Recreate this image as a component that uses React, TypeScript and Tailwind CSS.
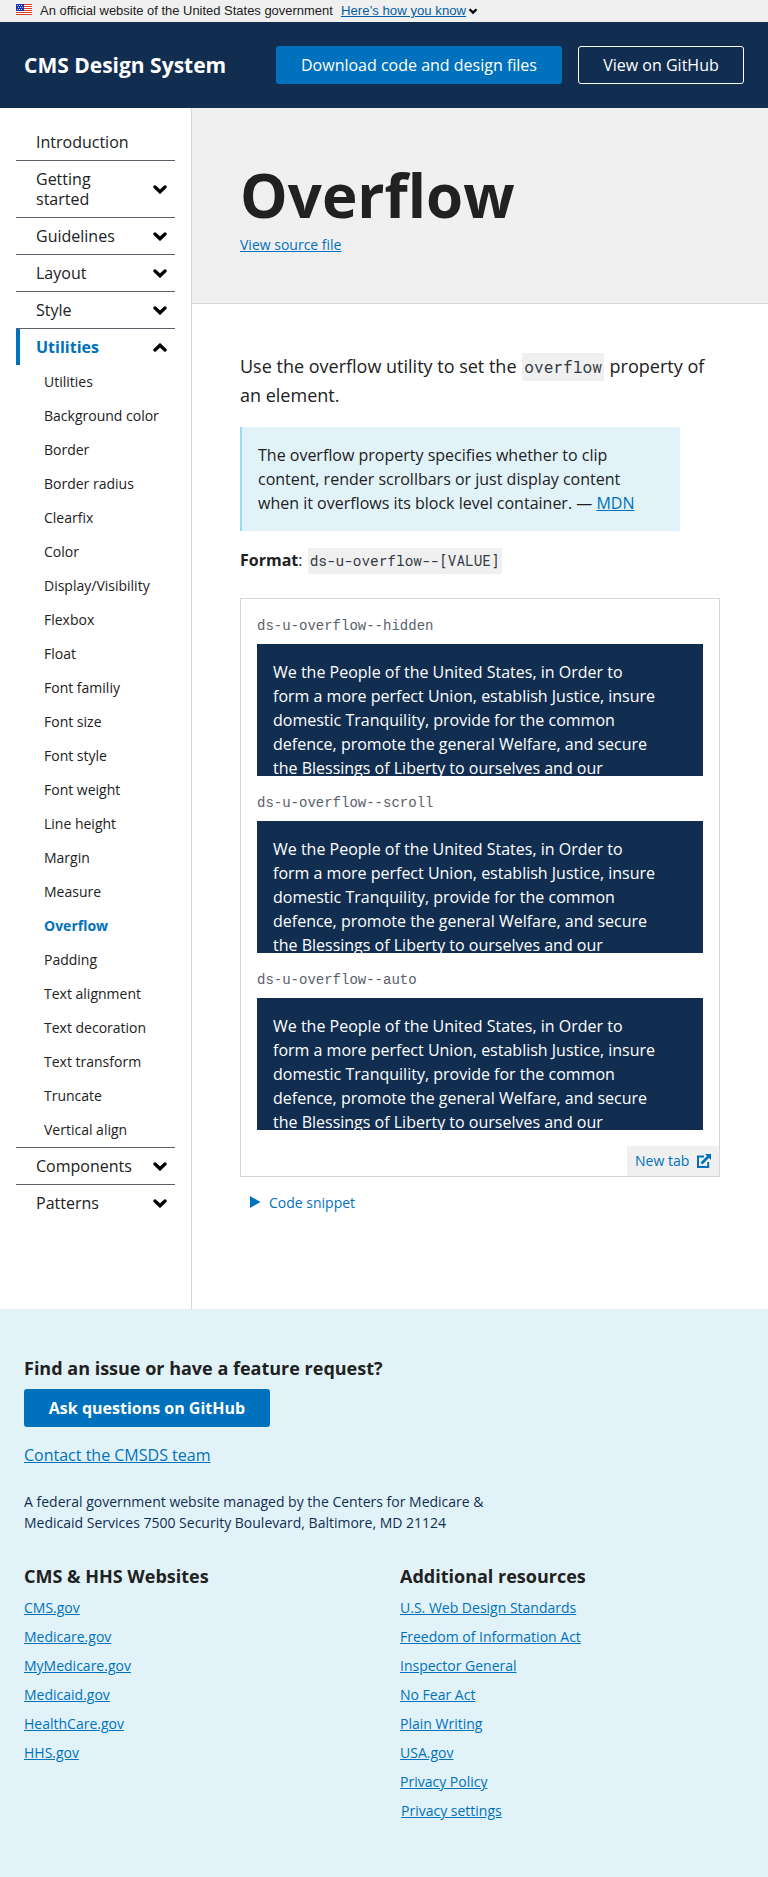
import React from "react";

const subItems = [
  "Utilities", "Background color", "Border", "Border radius", "Clearfix", "Color",
  "Display/Visibility", "Flexbox", "Float", "Font familiy", "Font size", "Font style",
  "Font weight", "Line height", "Margin", "Measure", "Overflow", "Padding",
  "Text alignment", "Text decoration", "Text transform", "Truncate", "Vertical align",
];

const cmsLinks = ["CMS.gov", "Medicare.gov", "MyMedicare.gov", "Medicaid.gov", "HealthCare.gov", "HHS.gov"];
const resourceLinks = [
  "U.S. Web Design Standards", "Freedom of Information Act", "Inspector General",
  "No Fear Act", "Plain Writing", "USA.gov", "Privacy Policy",
];

function Flag() {
  return (
    <svg className="h-[11px] w-4" viewBox="0 0 16 11" shapeRendering="crispEdges">
      <rect width="16" height="11" fill="#fff" />
      {[0, 2, 4, 6, 8, 10].map((y) => (
        <rect key={y} y={y} width="16" height="1" fill="#db3e1f" />
      ))}
      <rect width="8" height="7" fill="#1e33b1" />
      {[1, 3, 5].map((y) =>
        [1, 3, 5].map((x) => (
          <rect key={`${x}-${y}`} x={y === 3 ? x + 1 : x} y={y} width="1" height="1" fill="#c9cef0" />
        ))
      )}
    </svg>
  );
}

function Chevron({ up = false }: { up?: boolean }) {
  return (
    <svg className="h-[9px] w-3.5 shrink-0" viewBox="0 0 14 9">
      <path
        d={up ? "M2 7 L7 2.2 L12 7" : "M2 2 L7 6.8 L12 2"}
        fill="none"
        stroke="#000"
        strokeWidth="3.3"
        strokeLinecap="round"
      />
    </svg>
  );
}

function NavItem({ label, first = false }: { label: string; first?: boolean }) {
  return (
    <div className={first ? "" : "border-t border-[#5b616b]"}>
      <div className="flex items-center justify-between py-2 pr-2 pl-5">
        <span className="w-[84px] text-base leading-5 whitespace-normal">{label}</span>
        {!first && <Chevron />}
      </div>
    </div>
  );
}

function Example({ name }: { name: string }) {
  return (
    <div className="h-[177px]">
      <div className="flex h-[45px] items-center pt-[9px] font-['Courier_New','Liberation_Mono',monospace] text-sm leading-5 text-[#5b616b]">
        {name}
      </div>
      <div className="h-[132px] overflow-hidden bg-[#112e51] p-4 text-base leading-6 text-white">
        We the People of the United States, in Order to
        <br />
        form a more perfect Union, establish Justice, insure
        <br />
        domestic Tranquility, provide for the common
        <br />
        defence, promote the general Welfare, and secure
        <br />
        the Blessings of Liberty to ourselves and our
      </div>
    </div>
  );
}

function FooterLink({ children }: { children: React.ReactNode }) {
  return (
    <li className="h-[29px] text-sm leading-[21px]">
      <a className="text-[#0071bc] underline">{children}</a>
    </li>
  );
}

export default function App() {
  return (
    <div className="w-[768px] bg-white font-['Open_Sans',sans-serif] text-[#212121]">
      <div className="flex h-[22px] items-center bg-[#f0f0f0] pl-4 font-['Liberation_Sans',sans-serif] text-[12.96px]">
        <div className="pb-[3px]"><Flag /></div>
        <span className="ml-2 w-[301px] whitespace-nowrap">An official website of the United States government</span>
        <a className="w-[127px] text-[13.2px] whitespace-nowrap text-[#005ea2] underline">Here’s how you know</a>
        <svg className="h-2 w-[10px]" viewBox="0 0 10 8">
          <path d="M1.5 2.2 L5 5.6 L8.5 2.2" fill="none" stroke="#000" strokeWidth="2.2" />
        </svg>
      </div>

      <header className="flex h-[86px] items-center bg-[#112e51] px-6 text-white">
        <div className="text-[21px] leading-6 font-bold">CMS Design System</div>
        <div className="ml-auto flex gap-4 text-base">
          <a className="flex h-[38px] w-[286px] items-center justify-center rounded-[3px] bg-[#0071bc]">Download code and design files</a>
          <a className="flex h-[38px] w-[166px] items-center justify-center rounded-[3px] border border-white">View on GitHub</a>
        </div>
      </header>

      <div className="flex h-[1201px]">
        <nav className="w-48 shrink-0 border-r border-[#d6d7d9] py-4 pr-4 pl-4">
          <NavItem label="Introduction" first />
          {["Getting started", "Guidelines", "Layout", "Style"].map((l) => (
            <NavItem key={l} label={l} />
          ))}
          <div className="border-t border-[#5b616b]">
            <div className="flex items-center justify-between border-l-4 border-[#0071bc] py-2 pr-2 pl-4">
              <span className="text-base leading-5 font-bold text-[#0071bc]">Utilities</span>
              <Chevron up />
            </div>
          </div>
          <ul>
            {subItems.map((l) => (
              <li
                key={l}
                className={
                  l === "Overflow"
                    ? "h-[34px] pl-7 text-sm leading-[34px] font-bold text-[#0071bc]"
                    : "h-[34px] pl-7 text-sm leading-[34px]"
                }
              >
                {l}
              </li>
            ))}
          </ul>
          <NavItem label="Components" />
          <NavItem label="Patterns" />
        </nav>

        <main className="min-w-0 flex-1">
          <div className="h-[196px] border-b border-[#d6d7d9] bg-[#f0f0f0] pt-12 pl-12">
            <h1 className="text-[60px] leading-[78px] font-bold">Overflow</h1>
            <a className="block text-sm leading-[21px] text-[#0071bc] underline">View source file</a>
          </div>
          <div className="px-12 pt-12">
            <p className="text-lg leading-[29px]">
              Use the overflow utility to set the{" "}
              <code className="mx-px bg-[#f0f0f0] px-[2px] pt-[3px] pb-[4px] font-['Roboto_Mono','Liberation_Mono',monospace] text-[16.2px] text-[#323a45]">overflow</code>{" "}
              property of
              <br />
              an element.
            </p>
            <blockquote className="mt-[17px] h-[104px] w-[440px] border-l-2 border-[#9bdaf1] bg-[#e1f3f8] py-4 pl-4 text-base leading-6">
              The overflow property specifies whether to clip
              <br />
              content, render scrollbars or just display content
              <br />
              when it overflows its block level container. — <a className="text-[#0071bc] underline">MDN</a>
            </blockquote>
            <p className="mt-[17px] text-base leading-6">
              <b>Format</b>:{" "}
              <code className="mx-px bg-[#f0f0f0] px-[2px] pt-[3px] pb-[4px] font-['Roboto_Mono','Liberation_Mono',monospace] text-[14.4px] text-[#323a45]">ds-u-overflow--[VALUE]</code>
            </p>
            <section className="mt-[25px] h-[579px] border border-[#d6d7d9]">
              <div className="px-4">
                <Example name="ds-u-overflow--hidden" />
                <Example name="ds-u-overflow--scroll" />
                <Example name="ds-u-overflow--auto" />
              </div>
              <div className="mt-4 flex justify-end">
                <a className="flex h-[30px] w-[92px] items-center justify-between bg-[#f0f0f0] px-2 text-sm text-[#0071bc]">
                  New tab
                  <svg className="h-3.5 w-3.5" viewBox="0 0 14 14">
                    <path d="M7 2.5 H1 V13 H11.2 V8" fill="none" stroke="#0071bc" strokeWidth="2" />
                    <path d="M4.5 9.5 L11.5 2.5" stroke="#0071bc" strokeWidth="2.6" />
                    <path d="M8 0 H14 V6 Z" fill="#0071bc" />
                  </svg>
                </a>
              </div>
            </section>
            <div className="mt-[15px] flex items-center pl-[10px] text-sm leading-[21px] text-[#0071bc]">
              <svg className="mr-2 mb-[2px] h-3 w-[11px]" viewBox="0 0 11 12">
                <path d="M0 0 L10.5 6 L0 12 Z" fill="#0071bc" />
              </svg>
              Code snippet
            </div>
          </div>
        </main>
      </div>

      <footer className="h-[568px] bg-[#e1f3f8] px-6 pt-[47px]">
        <h2 className="text-lg leading-6 font-bold">Find an issue or have a feature request?</h2>
        <a className="mt-[9px] flex h-[38px] w-[246px] items-center justify-center rounded-[3px] bg-[#0071bc] text-base font-bold text-white">
          Ask questions on GitHub
        </a>
        <a className="mt-4 block text-base leading-6 text-[#0071bc] underline">Contact the CMSDS team</a>
        <p className="mt-6 text-sm leading-[21px] text-[#112e51]">
          A federal government website managed by the Centers for Medicare &amp;
          <br />
          Medicaid Services 7500 Security Boulevard, Baltimore, MD 21124
        </p>
        <div className="mt-[31px] flex">
          <div className="w-[376px]">
            <h2 className="mb-[9px] text-lg leading-6 font-bold">CMS &amp; HHS Websites</h2>
            <ul>{cmsLinks.map((l) => <FooterLink key={l}>{l}</FooterLink>)}</ul>
          </div>
          <div>
            <h2 className="mb-[9px] text-lg leading-6 font-bold">Additional resources</h2>
            <ul>
              {resourceLinks.map((l) => <FooterLink key={l}>{l}</FooterLink>)}
              <li className="pl-px text-sm leading-[21px]"><a className="text-[#0071bc] underline">Privacy settings</a></li>
            </ul>
          </div>
        </div>
      </footer>
    </div>
  );
}
